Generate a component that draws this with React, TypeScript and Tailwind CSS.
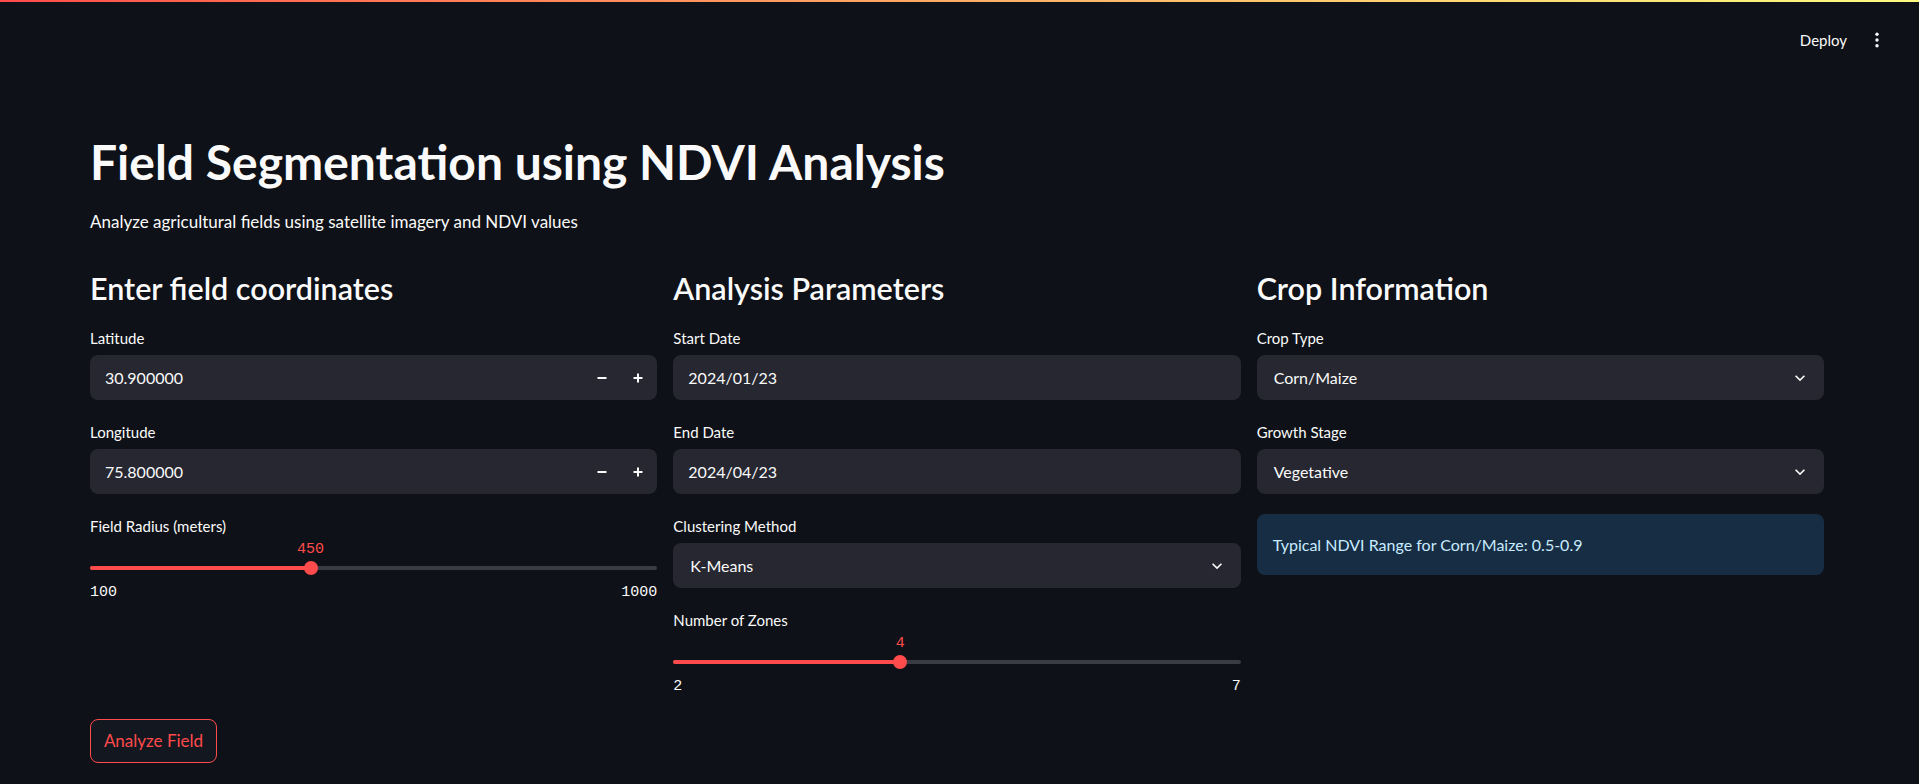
import React from 'react';

// Streamlit-style dark page: NDVI field segmentation form

const Label: React.FC<{ children: React.ReactNode }> = ({ children }) => (
  <div className="h-6 flex items-center text-[15px] text-[#fafafa] mb-[5px]">{children}</div>
);

const Chevron = () => (
  <svg width="20" height="20" viewBox="0 0 24 24" fill="#fafafa">
    <path d="M16.59 8.59 12 13.17 7.41 8.59 6 10l6 6 6-6z" />
  </svg>
);

const NumberField: React.FC<{ label: string; value: string }> = ({ label, value }) => (
  <div>
    <Label>{label}</Label>
    <div className="h-[45px] rounded-lg bg-[#262730] flex items-center pl-[15px] pr-px">
      <span className="flex-1 text-base text-[#fafafa]">{value}</span>
      <div className="w-9 h-full flex items-center justify-center">
        <svg width="10" height="10" viewBox="0 0 10 10">
          <rect x="0.5" y="4" width="9" height="2" fill="#fafafa" />
        </svg>
      </div>
      <div className="w-9 h-full flex items-center justify-center">
        <svg width="10" height="10" viewBox="0 0 10 10">
          <rect x="0.5" y="4" width="9" height="2" fill="#fafafa" />
          <rect x="4" y="0.5" width="2" height="9" fill="#fafafa" />
        </svg>
      </div>
    </div>
  </div>
);

const TextField: React.FC<{ label: string; value: string }> = ({ label, value }) => (
  <div>
    <Label>{label}</Label>
    <div className="h-[45px] rounded-lg bg-[#262730] flex items-center pl-[15px]">
      <span className="text-base text-[#fafafa]">{value}</span>
    </div>
  </div>
);

const SelectField: React.FC<{ label: string; value: string }> = ({ label, value }) => (
  <div>
    <Label>{label}</Label>
    <div className="h-[45px] rounded-lg bg-[#262730] flex items-center pl-[17px] pr-[14px]">
      <span className="flex-1 text-base text-[#fafafa]">{value}</span>
      <Chevron />
    </div>
  </div>
);

const SliderField: React.FC<{ label: string; min: number; max: number; value: number }> = ({
  label,
  min,
  max,
  value,
}) => {
  const pct = ((value - min) / (max - min)) * 100;
  return (
    <div>
      <div className="h-6 flex items-center text-[15px] text-[#fafafa]">{label}</div>
      <div className="relative h-5 mt-[2px]">
        <span
          className="absolute top-0 -translate-x-1/2 font-['Liberation_Mono',monospace] text-[15px] leading-5 text-[#ff4b4b]"
          style={{ left: `${pct}%` }}
        >
          {value}
        </span>
      </div>
      <div className="relative h-4 flex items-center">
        <div className="h-1 w-full rounded-full bg-[#3a3b44]">
          <div className="h-full rounded-full bg-[#ff4b4b]" style={{ width: `${pct}%` }} />
        </div>
        <div
          className="absolute top-1/2 w-[14px] h-[14px] rounded-full bg-[#ff4b4b] -translate-x-1/2 -translate-y-1/2"
          style={{ left: `${pct}%` }}
        />
      </div>
      <div className="mt-[7px] flex justify-between font-['Liberation_Mono',monospace] text-[15px] leading-5 text-[#fafafa]">
        <span>{min}</span>
        <span>{max}</span>
      </div>
    </div>
  );
};

export default function App() {
  return (
    <div className="h-screen overflow-hidden bg-[#0e1117] text-[#fafafa] font-[Lato,sans-serif]">
      {/* decoration bar */}
      <div className="h-[2px] bg-linear-to-r from-[#ff4b4b] to-[#fffd80]" />

      {/* header */}
      <div className="h-[76px] flex items-center justify-end pr-[26px]">
        <span className="text-[15px] text-[#fafafa]">Deploy</span>
        <div className="w-8 ml-[14px] flex justify-center">
          <svg width="4" height="16" viewBox="0 0 4 16" fill="#fafafa">
            <circle cx="2" cy="2.3" r="1.7" />
            <circle cx="2" cy="8" r="1.7" />
            <circle cx="2" cy="13.7" r="1.7" />
          </svg>
        </div>
      </div>

      {/* main block */}
      <div className="pl-[90px] pr-[95px] pt-[57px]">
        <h1 className="text-[48px] leading-[53px] font-bold text-[#fafafa]">
          Field Segmentation using NDVI Analysis
        </h1>
        <p className="mt-[22px] text-[17px] leading-6 text-[#fafafa]">
          Analyze agricultural fields using satellite imagery and NDVI values
        </p>

        <div className="mt-[37px] grid grid-cols-3 gap-4">
          {/* column 1 */}
          <div className="flex flex-col">
            <h3 className="text-[30.5px] leading-[34px] font-semibold mb-[21px]">Enter field coordinates</h3>
            <div className="flex flex-col gap-5">
              <NumberField label="Latitude" value="30.900000" />
              <NumberField label="Longitude" value="75.800000" />
              <SliderField label="Field Radius (meters)" min={100} max={1000} value={450} />
            </div>
          </div>

          {/* column 2 */}
          <div className="flex flex-col">
            <h3 className="text-[30.5px] leading-[34px] font-semibold mb-[21px]">Analysis Parameters</h3>
            <div className="flex flex-col gap-5">
              <TextField label="Start Date" value="2024/01/23" />
              <TextField label="End Date" value="2024/04/23" />
              <SelectField label="Clustering Method" value="K-Means" />
              <SliderField label="Number of Zones" min={2} max={7} value={4} />
            </div>
          </div>

          {/* column 3 */}
          <div className="flex flex-col">
            <h3 className="text-[30.5px] leading-[34px] font-semibold mb-[21px]">Crop Information</h3>
            <div className="flex flex-col gap-5">
              <SelectField label="Crop Type" value="Corn/Maize" />
              <SelectField label="Growth Stage" value="Vegetative" />
              <div className="h-[61px] rounded-lg bg-[#172d43] flex items-center px-4 text-base text-[#c7ebff]">
                Typical NDVI Range for Corn/Maize: 0.5-0.9
              </div>
            </div>
          </div>
        </div>

        <button className="mt-[22px] w-[127px] h-[44px] rounded-lg border border-[#ff4b4b] bg-[#131720] text-[17px] text-[#ff4b4b]">
          Analyze Field
        </button>
      </div>
    </div>
  );
}
